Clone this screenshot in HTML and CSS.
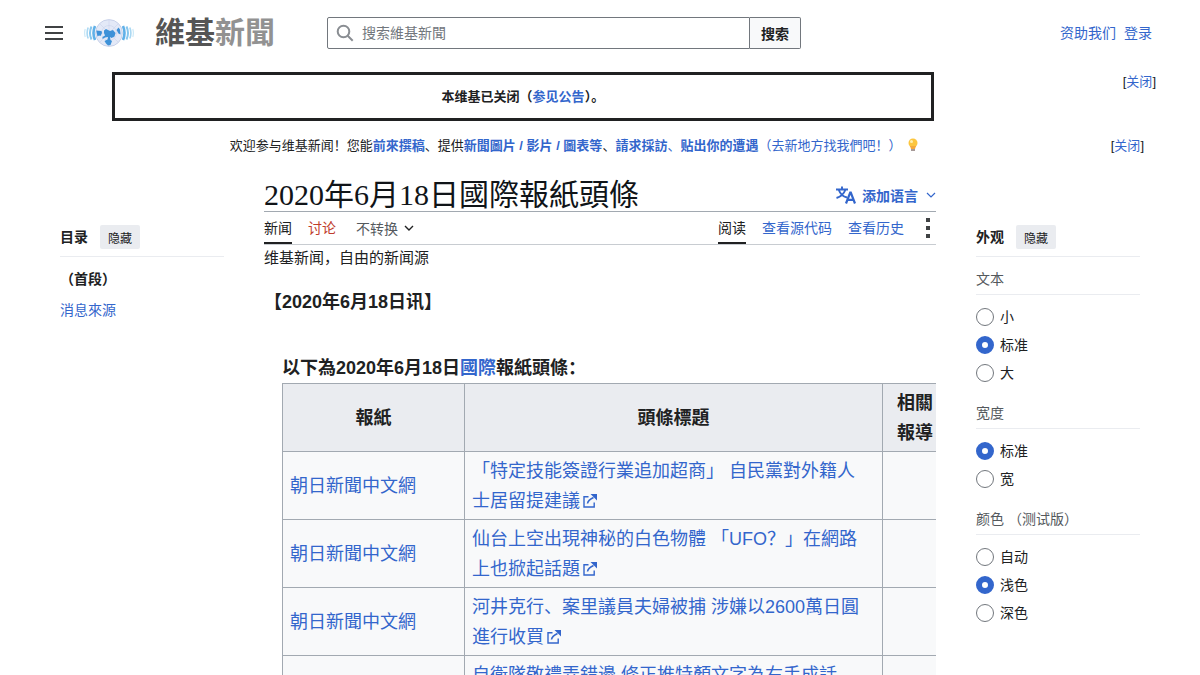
FILE: index.html
```html
<!DOCTYPE html>
<html lang="zh">
<head>
    <meta charset="UTF-8">
    <meta name="viewport" content="width=device-width, initial-scale=1.0">
    <title>2020年6月18日國際報紙頭條 - 維基新聞</title>
    <link rel="stylesheet" href="styles.css">
</head>
<body>
    <div class="page">
        <header class="header">
            <button class="menu-button" type="button" aria-label="主菜单">
                <svg width="20" height="20" viewBox="0 0 20 20"><path d="M1 3h18v2H1zM1 9h18v2H1zM1 15h18v2H1z" fill="#404244"/></svg>
            </button>
            <a class="logo" href="#">
                <svg class="logo-icon" width="50" height="30" viewBox="0 0 50 30">
                    <g fill="none">
                        <path d="M11 8Q8 15 11 22M39 8Q42 15 39 22" stroke="#5fb0e8" stroke-width="2.600"/>
                        <path d="M7.500 8.500Q4.500 15 7.500 21.500M42.500 8.500Q45.500 15 42.500 21.500" stroke="#86c6ee" stroke-width="2"/>
                        <path d="M4.200 9.500Q2 15 4.200 20.500M45.800 9.500Q48 15 45.800 20.500" stroke="#a9d8f3" stroke-width="1.600"/>
                        <path d="M1.200 11Q0 15 1.200 19M48.800 11Q50 15 48.800 19" stroke="#cde9f7" stroke-width="1.200"/>
                    </g>
                    <circle cx="25" cy="15" r="13.400" fill="#e3e9f7" stroke="#bfc9e4" stroke-width=".8"/>
                    <path d="M25 2v26M12 15h26M16 6l18 18M34 6L16 24" stroke="#c5cfe8" stroke-width=".5"/>
                    <circle cx="25" cy="15" r="7.500" fill="none" stroke="#c5cfe8" stroke-width=".5"/>
                    <path d="M12.200 12.500l5.300.5.500 2-1.500 3-1.500-.5-1.500 1zM20 12.500l2-1.500 4 2 3-1 2.500 3-1 3.500-3 1.500-1.500-1 .5 3 1.500 1-1.500 4-2.500.5-2-2-1.500-2.500 3-1.500.5-2.500-3 .5-2.500 1.500v-2l2.500-1.500-1-2.500zM32.500 12l2-2.500 1.500 2 .5 5-2-1z" fill="#3d91d8"/>
                </svg>
                <span class="logo-text">維基<span class="logo-light">新聞</span></span>
            </a>
            <form class="search" role="search">
                <label class="search-box">
                    <svg width="18" height="18" viewBox="0 0 18 18" fill="none" stroke="#898d92" stroke-width="2"><circle cx="7.500" cy="7.500" r="5.800"/><path d="M11.700 11.700l5 5"/></svg>
                    <input class="search-input" type="search" placeholder="搜索維基新聞" aria-label="搜索維基新聞">
                </label>
                <button class="search-button" type="button">搜索</button>
            </form>
            <nav class="user-links">
                <a href="#">资助我们</a>
                <a href="#">登录</a>
            </nav>
        </header>

        <div class="closed-notice">
            <div class="closed-box">本维基已关闭（<a href="#">参见公告</a>）。</div>
            <span class="dismiss">[<a href="#">关闭</a>]</span>
        </div>
        <div class="site-notice">
            <p class="site-notice-text">欢迎参与维基新闻！您能<a href="#"><b>前來撰稿</b></a>、提供<a href="#"><b>新聞圖片 / 影片 / 圖表等</b></a>、<a href="#"><b>請求採訪</b>、<b>贴出你的遭遇</b>（去新地方找我們吧！）</a>
                <svg class="bulb" width="12" height="14" viewBox="0 0 12 14"><circle cx="6" cy="5" r="4.500" fill="#fcc63f"/><path d="M3 8h6l-1 3H4z" fill="#f5a93c"/><circle cx="4.500" cy="3.500" r="1.500" fill="#fff0b0"/><path d="M4 11h4v2H4z" fill="#a79a98"/></svg>
            </p>
            <span class="dismiss">[<a href="#">关闭</a>]</span>
        </div>

        <div class="columns">
            <nav class="sidebar">
                <div class="sidebar-head">
                    <h2>目录</h2>
                    <button class="hide-button" type="button">隐藏</button>
                </div>
                <ul class="toc">
                    <li><a class="toc-active" href="#">（首段）</a></li>
                    <li><a href="#">消息來源</a></li>
                </ul>
            </nav>

            <main class="content">
                <div class="title-bar">
                    <h1>2020年6月18日國際報紙頭條</h1>
                    <button class="lang-button" type="button">
                        <svg width="20" height="20" viewBox="0 0 20 20" fill="none" stroke="#36c" stroke-width="1.900"><path d="M0 4.500h12M6 1.500v3M2.800 5Q5 11 11 12.500M9.300 5Q7 11 .5 13"/><path d="M10 18.500l4.200-11h.6l4.200 11M11.500 14.800h6" stroke-width="2.200"/></svg>
                        <span>添加语言</span>
                        <svg width="10" height="6" viewBox="0 0 10 6" fill="none" stroke="#36c" stroke-width="1.200"><path d="M1 1l4 4 4-4"/></svg>
                    </button>
                </div>
                <div class="tabs">
                    <a class="tab tab-active" href="#">新闻</a>
                    <a class="tab tab-new" href="#">讨论</a>
                    <button class="variant-button" type="button">不转换
                        <svg width="10" height="6" viewBox="0 0 10 6" fill="none" stroke="#202122" stroke-width="1.400"><path d="M1 1l4 4 4-4"/></svg>
                    </button>
                    <a class="tab tab-active tab-first-right" href="#">阅读</a>
                    <a class="tab" href="#">查看源代码</a>
                    <a class="tab" href="#">查看历史</a>
                    <button class="more-button" type="button" aria-label="更多">
                        <svg width="4" height="20" viewBox="0 0 4 20" fill="#404244"><path d="M0 0h4v4H0zM0 8h4v4H0zM0 16h4v4H0z"/></svg>
                    </button>
                </div>
                <p class="tagline">维基新闻，自由的新闻源</p>

                <article class="article">
                    <p class="dateline">【2020年6月18日讯】</p>
                    <div class="headlines">
                        <p class="intro">以下為2020年6月18日<a href="#">國際</a>報紙頭條：</p>
                        <table class="news-table">
                            <thead>
                                <tr><th class="col-paper">報紙</th><th class="col-title">頭條標題</th><th class="col-related">相關<br>報導</th></tr>
                            </thead>
                            <tbody>
                                <tr>
                                    <td><a href="#">朝日新聞中文網</a></td>
                                    <td><a href="#">「特定技能簽證行業追加超商」 自民黨對外籍人<br>士居留提建議<svg class="external" width="14" height="14" viewBox="0 0 14 14"><use href="#external"/></svg></a></td>
                                    <td></td>
                                </tr>
                                <tr>
                                    <td><a href="#">朝日新聞中文網</a></td>
                                    <td><a href="#">仙台上空出現神秘的白色物體 「UFO？」在網路<br>上也掀起話題<svg class="external" width="14" height="14" viewBox="0 0 14 14"><use href="#external"/></svg></a></td>
                                    <td></td>
                                </tr>
                                <tr>
                                    <td><a href="#">朝日新聞中文網</a></td>
                                    <td><a href="#">河井克行、案里議員夫婦被捕 涉嫌以2600萬日圓<br>進行收買<svg class="external" width="14" height="14" viewBox="0 0 14 14"><use href="#external"/></svg></a></td>
                                    <td></td>
                                </tr>
                                <tr>
                                    <td><a href="#">朝日新聞中文網</a></td>
                                    <td><a href="#">自衛隊敬禮弄錯邊 修正推特顏文字為右手成話<br>題<svg class="external" width="14" height="14" viewBox="0 0 14 14"><use href="#external"/></svg></a></td>
                                    <td></td>
                                </tr>
                            </tbody>
                        </table>
                    </div>
                </article>
            </main>

            <aside class="sidebar">
                <div class="sidebar-head">
                    <h2>外观</h2>
                    <button class="hide-button" type="button">隐藏</button>
                </div>
                <fieldset class="option-group">
                    <legend>文本</legend>
                    <label><input type="radio" name="text-size">小</label>
                    <label><input type="radio" name="text-size" checked>标准</label>
                    <label><input type="radio" name="text-size">大</label>
                </fieldset>
                <fieldset class="option-group">
                    <legend>宽度</legend>
                    <label><input type="radio" name="width" checked>标准</label>
                    <label><input type="radio" name="width">宽</label>
                </fieldset>
                <fieldset class="option-group">
                    <legend>颜色 （测试版）</legend>
                    <label><input type="radio" name="color">自动</label>
                    <label><input type="radio" name="color" checked>浅色</label>
                    <label><input type="radio" name="color">深色</label>
                </fieldset>
            </aside>
        </div>
    </div>

    <svg class="symbols" width="0" height="0">
        <symbol id="external" viewBox="0 0 14 14"><path d="M5.500 2.800H1v10.200h10.200V8.500" fill="none" stroke="#36c" stroke-width="1.400"/><path d="M4.500 9.500Q5 6 10.500 3.500" fill="none" stroke="#36c" stroke-width="1.600"/><path d="M7.500 0H14v6.500z" fill="#36c"/></symbol>
    </svg>
</body>
</html>
```

FILE: styles.css
```css
* {
    box-sizing: border-box;
}

body {
    margin: 0;
    background-color: #fff;
    color: #202122;
    font-family: "Liberation Sans", "Noto Sans CJK SC", sans-serif;
    font-size: 14px;
    line-height: 22px;
}

h1, h2, p, ul, fieldset {
    margin: 0;
    padding: 0;
}

a {
    color: #36c;
    text-decoration: none;
}

button, input {
    font-family: inherit;
    font-size: 14px;
    color: inherit;
}

button {
    padding: 0;
    border: none;
    background: none;
    cursor: pointer;
}

.page {
    padding: 0 44px;
}

/* header */
.header {
    display: flex;
    align-items: center;
    height: 66px;
}

.menu-button, .more-button {
    display: flex;
}

.logo {
    display: flex;
    align-items: center;
    margin-left: 20px;
    gap: 21px;
}

.logo-text {
    font-size: 30px;
    font-weight: bold;
    line-height: 40px;
    color: #555;
}

.logo-light {
    color: #929292;
}

.search {
    display: flex;
    width: 474px;
    height: 32px;
    margin-left: 52px;
}

.search-box {
    display: flex;
    flex: 1;
    align-items: center;
    gap: 8px;
    padding-left: 8px;
    border: 1px solid #72777d;
    border-radius: 2px 0 0 2px;
}

.search-input {
    flex: 1;
    min-width: 0;
    padding: 0;
    border: none;
    outline: none;
    background: none;
}

.search-input::placeholder {
    color: #72777d;
}

.search-button {
    width: 51px;
    border: 1px solid #72777d;
    border-left: none;
    border-radius: 0 2px 2px 0;
    background-color: #f8f9fa;
    font-weight: bold;
}

.user-links {
    display: flex;
    gap: 8px;
    margin-left: auto;
    padding-right: 4px;
}

/* notices */
.closed-notice, .site-notice {
    display: flex;
    font-size: 13px;
    line-height: 19px;
}

.closed-notice {
    gap: 189px;
    padding: 6px 0 0 68px;
}

.closed-box {
    flex: 1;
    padding: 12px;
    border: 3px solid #202122;
    font-weight: bold;
    text-align: center;
}

.site-notice {
    gap: 6px;
    padding: 15px 12px 0 0;
}

.site-notice-text {
    flex: 1;
    text-align: center;
}

.bulb {
    margin-left: 2px;
    vertical-align: -2px;
}

.dismiss {
    white-space: nowrap;
}

/* three column area */
.columns {
    display: grid;
    grid-template-columns: 164px minmax(0, 1fr) 164px;
    gap: 40px;
    padding: 20px 16px 0;
}

.sidebar {
    padding-top: 50px;
}

.sidebar-head {
    display: flex;
    align-items: center;
    gap: 12px;
    padding-bottom: 7px;
    border-bottom: 1px solid #eaecf0;
}

.sidebar-head h2 {
    font-size: 14px;
}

.hide-button {
    height: 24px;
    padding: 0 8px;
    border-radius: 2px;
    background-color: #eaecf0;
    font-size: 12px;
}

.toc {
    display: flex;
    flex-direction: column;
    gap: 9px;
    padding-top: 11px;
    list-style: none;
}

.toc-active {
    color: #202122;
    font-weight: bold;
}

.title-bar {
    display: flex;
    justify-content: space-between;
    align-items: center;
    height: 37px;
    padding-top: 4px;
    border-bottom: 1px solid #a2a9b1;
}

h1 {
    color: #101418;
    font-family: "Liberation Serif", "Noto Sans CJK SC", serif;
    font-size: 30px;
    font-weight: normal;
    line-height: 36px;
}

.lang-button {
    display: flex;
    align-items: center;
    gap: 6px;
    color: #36c;
    font-weight: bold;
}

.lang-button span {
    margin-right: 2px;
}

.tabs {
    display: flex;
    gap: 16px;
    height: 33px;
    border-bottom: 1px solid #c8ccd1;
}

.tab {
    padding-top: 5px;
}

.tab-active {
    border-bottom: 2px solid #202122;
    color: #202122;
}

.tab-new {
    color: #bf3c2c;
}

.variant-button {
    display: flex;
    align-items: center;
    gap: 6px;
    padding-left: 4px;
    color: #54595d;
}

.tab-first-right {
    margin-left: auto;
}

.more-button {
    align-items: center;
    padding: 0 6px;
}

/* article */
.tagline {
    padding-top: 2px;
    font-size: 15px;
}

.article {
    overflow: hidden;
    padding-top: 18px;
    font-size: 18px;
    line-height: 30px;
}

.dateline, .intro {
    font-weight: bold;
}

.headlines {
    width: 666px;
    margin: 36px 0 0 18px;
}

.news-table {
    width: 100%;
    border-collapse: collapse;
    table-layout: fixed;
    background-color: #f8f9fa;
}

.news-table th, .news-table td {
    height: 68px;
    padding: 4px 7px 3px;
    border: 1px solid #a2a9b1;
    white-space: nowrap;
}

.news-table th {
    background-color: #eaecf0;
}

.col-paper {
    width: 182px;
}

.col-title {
    width: 418px;
}

.external {
    margin-left: 3px;
    vertical-align: -1px;
}

/* appearance options */
.option-group {
    min-width: 0;
    padding-top: 11px;
    border: none;
}

.option-group + .option-group {
    padding-top: 15px;
}

.option-group legend {
    float: left;
    width: 100%;
    margin-bottom: 8px;
    padding: 0 0 4px;
    border-bottom: 1px solid #eaecf0;
    color: #54595d;
}

.option-group label {
    display: flex;
    clear: both;
    align-items: center;
    gap: 6px;
    height: 28px;
}

.option-group input {
    appearance: none;
    width: 18px;
    height: 18px;
    margin: 0;
    border: 1px solid #72777d;
    border-radius: 50%;
}

.option-group input:checked {
    border: 6px solid #36c;
}

.symbols {
    position: absolute;
}
```
